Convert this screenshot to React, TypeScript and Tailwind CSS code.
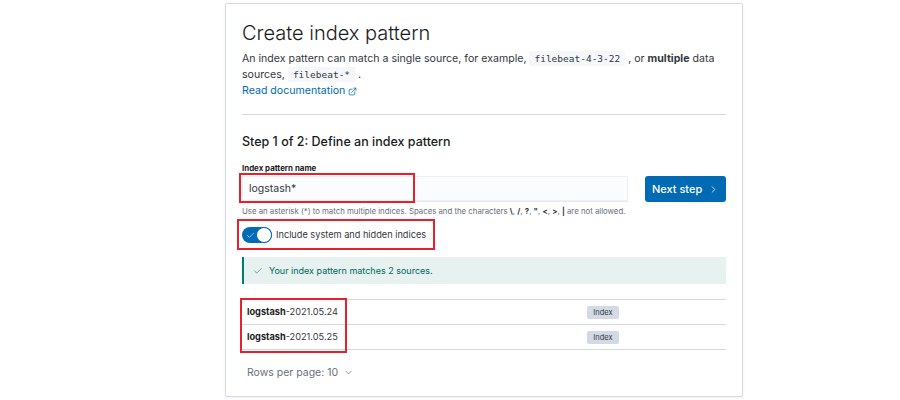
import { Check, ChevronDown, ChevronRight, ExternalLink } from "lucide-react";

const rows = [
  { name: "logstash", rest: "-2021.05.24" },
  { name: "logstash", rest: "-2021.05.25" },
];

const Code = ({ children }: { children: string }) => (
  <code className="inline-block bg-[#f5f7fa] px-[5px] text-[9.5px] leading-[15px] text-[#343741] [font-family:'DejaVu_Sans_Mono',monospace]">
    {children}
  </code>
);

export default function App() {
  return (
    <div className="w-[900px] h-[400px] bg-white pt-[3px] pl-[225px] [font-family:Inter,'Noto_Sans',sans-serif] text-[#343741]">
      <div className="w-[518px] h-[394px] border border-[#d3dae6] rounded-[2px] shadow-[0_1px_3px_rgba(0,0,0,0.06)] px-4 pt-[17px]">
        <h1 className="text-[20px] leading-[24px] font-light text-[#1a1c21]">Create index pattern</h1>
        <p className="mt-[6px] text-[10.6px] leading-[16px] text-[#343741]">
          <span>An index pattern can match a single source, for example, </span>
          <Code>filebeat-4-3-22</Code>
          <span> , or </span>
          <b className="font-bold">multiple</b>
          <span> data</span>
          <br />
          <span>sources, </span>
          <Code>filebeat-*</Code>
          <span> .</span>
        </p>
        <a className="flex items-center gap-[3px] text-[10.6px] leading-[16px] text-[#006bb4]">
          Read documentation
          <ExternalLink size={9} strokeWidth={2} />
        </a>

        <div className="mt-[15px] border-t border-[#d3dae6]" />

        <h2 className="mt-[18px] text-[12.5px] leading-[18px] font-medium text-[#1a1c21]">
          Step 1 of 2: Define an index pattern
        </h2>

        <div className="mt-[11px] text-[7.9px] leading-[12px] font-bold text-[#1a1c21]">Index pattern name</div>

        <div className="mt-[2px] flex items-center gap-[17px]">
          <div className="relative w-[387px] h-[26px] bg-[#fbfcfd] border-b border-[#e7eaf0] shadow-[inset_0_0_0_1px_rgba(17,43,134,0.06)] flex items-center pl-[7px] text-[10.5px] text-[#343741]">
            logstash*
            <div className="absolute left-[-3px] top-[-3px] w-[176px] h-[30px] border-[2.5px] border-[#e8202a]" />
          </div>
          <button className="w-[81px] h-[26px] bg-[#006bb4] rounded-[3px] text-white text-[11px] font-medium flex items-center justify-center gap-[6px]">
            Next step
            <ChevronRight size={11} strokeWidth={1.5} />
          </button>
        </div>

        <div className="mt-[2px] text-[7.8px] leading-[14px] text-[#69707d]">
          Use an asterisk (*) to match multiple indices. Spaces and the characters <b className="text-[#343741]">\</b>,{" "}
          <b className="text-[#343741]">/</b>, <b className="text-[#343741]">?</b>, <b className="text-[#343741]">"</b>,{" "}
          <b className="text-[#343741]">&lt;</b>, <b className="text-[#343741]">&gt;</b>, <b className="text-[#343741]">|</b> are not allowed.
        </div>

        <div className="relative mt-[7px] h-[20px] flex items-center gap-[4px]">
          <div className="w-[30px] h-[16px] rounded-full bg-[#006bb4] relative flex items-center pl-[4px]">
            <Check size={9} strokeWidth={2} className="text-[#b9d6ee]" />
            <div className="absolute right-0 top-0 w-[16px] h-[16px] rounded-full bg-white border border-[#006bb4]" />
          </div>
          <span className="text-[9.2px] text-[#343741]">Include system and hidden indices</span>
          <div className="absolute left-[-5px] top-[-6px] w-[198px] h-[31px] border-[2.5px] border-[#e8202a]" />
        </div>

        <div className="mt-[12px] h-[27px] bg-[#e6f1f0] border-l-2 border-[#017d73] flex items-center pl-[9px] gap-[6px] text-[9px] text-[#017d73]">
          <Check size={10} strokeWidth={1.5} />
          <span className="text-[#00695f]">Your index pattern matches 2 sources.</span>
        </div>

        <div className="relative mt-[15px] border-t border-[#d3dae6]">
          {rows.map((r, i) => (
            <div key={i} className="h-[25px] border-b border-[#d3dae6] flex items-center text-[9.2px]">
              <div className="w-[345px] pl-[5px]">
                <b className="font-bold text-[#1a1c21]">{r.name}</b>
                <span className="text-[#343741]">{r.rest}</span>
              </div>
              <span className="bg-[#d3dae6] w-[32px] text-center h-[13px] leading-[13px] text-[7.5px] text-[#343741] rounded-[2px]">
                Index
              </span>
            </div>
          ))}
          <div className="absolute left-[-2px] top-[-2px] w-[107px] h-[55px] border-[2.5px] border-[#e8202a]" />
        </div>

        <div className="mt-[15px] pl-[5px] flex items-center gap-[5px] text-[10.5px] text-[#69707d]">
          Rows per page: 10
          <ChevronDown size={11} strokeWidth={1.5} />
        </div>
      </div>
    </div>
  );
}
